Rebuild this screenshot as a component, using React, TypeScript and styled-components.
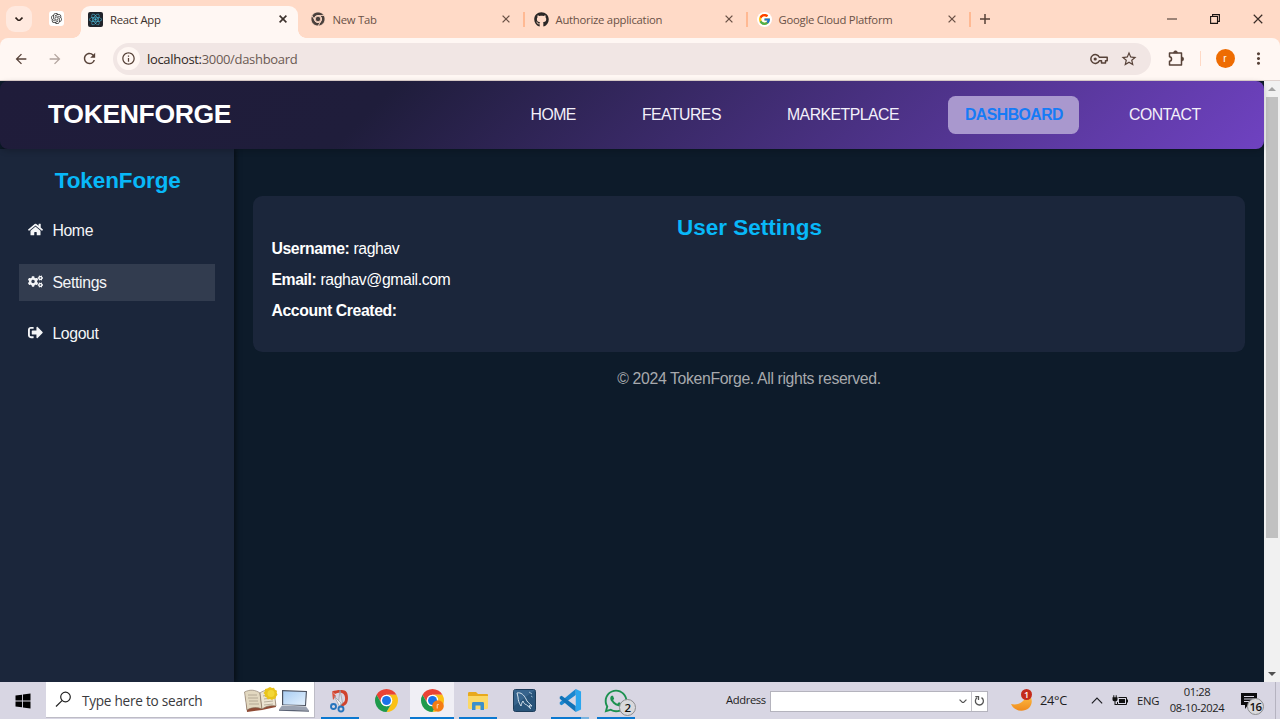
import React from 'react';
import styled, { createGlobalStyle } from 'styled-components';
import { FaHome, FaCogs, FaSignOutAlt, FaReact, FaGithub, FaWhatsapp } from 'react-icons/fa';
import { FcGoogle } from 'react-icons/fc';
import { RiOpenaiFill } from 'react-icons/ri';
import { MdArrowBack, MdArrowForward, MdRefresh, MdStarBorder, MdInfoOutline, MdMoreVert } from 'react-icons/md';

const GlobalStyle = createGlobalStyle`
  * { box-sizing: border-box; }
  html, body { margin: 0; padding: 0; }
  body { width: 1280px; height: 719px; overflow: hidden; font-family: "Liberation Sans", Arial, sans-serif; }
  svg { display: block; flex: none; }
  h2, p { margin: 0; }
`;

const UI_FONT = '"Open Sans", "Noto Sans", sans-serif';

const Screen = styled.div`
  display: flex;
  flex-direction: column;
  width: 1280px;
  height: 719px;
  overflow: hidden;
`;

/* ---------- browser ---------- */
const TabStrip = styled.div`
  display: flex;
  height: 38px;
  padding-top: 6px;
  background: #ffdac7;
  font-family: ${UI_FONT};
  color: #574238;
`;
const TabSearch = styled.div`
  display: grid;
  place-items: center;
  width: 26px;
  height: 26px;
  margin-left: 6px;
  border-radius: 9px;
  background: #ffe9df;
  color: #2e211b;
`;
const PinnedTab = styled.div`
  display: grid;
  place-items: center;
  width: 15px;
  height: 15px;
  margin: 5px 17px 0 17px;
  border-radius: 3px;
  background: #fff;
  color: #333;
`;
const Tab = styled.div<{ $active?: boolean }>`
  position: relative;
  display: flex;
  align-items: center;
  width: ${p => (p.$active ? 217 : 223)}px;
  height: ${p => (p.$active ? 32 : 26)}px;
  margin-right: ${p => (p.$active ? 5.5 : 0)}px;
  padding: ${p => (p.$active ? '0 11px 6px 7px' : '0 2px 0 7px')};
  gap: 7px;
  border-radius: 9px 9px 0 0;
  background: ${p => (p.$active ? '#fff7f3' : 'transparent')};
  color: ${p => (p.$active ? '#3c312c' : '#6a5146')};
  ${p => p.$active && `
    &::before, &::after {
      content: "";
      position: absolute;
      bottom: 0;
      width: 8px;
      height: 8px;
    }
    &::before { left: -8px; background: radial-gradient(circle at 0 0, transparent 7.5px, #fff7f3 8px); }
    &::after { right: -8px; background: radial-gradient(circle at 100% 0, transparent 7.5px, #fff7f3 8px); }
  `}
`;
const TabTitle = styled.span`
  flex: 1;
  font-size: 11.3px;
  line-height: 15px;
  letter-spacing: -0.25px;
  white-space: nowrap;
`;
const TabDivider = styled.i`
  width: 1.5px;
  height: 15px;
  margin-left: 6.5px;
  background: #ffb993;
`;
const TabIcon = styled.span<{ $kind?: 'react' | 'round' }>`
  display: grid;
  place-items: center;
  width: 15px;
  height: 15px;
  border-radius: ${p => (p.$kind === 'round' ? '50%' : '2px')};
  background: ${p => (p.$kind === 'react' ? '#20232a' : p.$kind === 'round' ? '#fff' : 'transparent')};
  color: ${p => (p.$kind === 'react' ? '#4cb9d8' : '#2b2726')};
`;
const NewTab = styled.div`
  padding: 8px 0 0 7.5px;
`;
const WindowControls = styled.div`
  display: flex;
  width: 130px;
  height: 26px;
  margin-left: auto;
  color: #3a2d27;
`;
const WindowControl = styled.div`
  display: grid;
  place-items: center;
  width: 43.3px;
`;
const Toolbar = styled.div`
  display: flex;
  align-items: center;
  height: 43px;
  padding: 0 0 1px 11px;
  border-bottom: 1px solid #dfd2ce;
  border-radius: 8px 8px 0 0;
  background: #fff7f3;
  color: #574238;
  font-family: ${UI_FONT};
`;
const ToolbarWrap = styled.div`
  background: #ffdac7;
`;
const NavButton = styled.div<{ $dim?: boolean }>`
  display: grid;
  place-items: center;
  width: 20px;
  margin-right: 14px;
  opacity: ${p => (p.$dim ? 0.45 : 1)};
`;
const AddressBar = styled.div`
  display: flex;
  align-items: center;
  width: 1038px;
  height: 32px;
  padding: 0 13.5px 0 4px;
  border-radius: 16px;
  background: #f1e6e4;
`;
const SiteInfo = styled.div`
  display: grid;
  place-items: center;
  width: 23px;
  height: 23px;
  margin-right: 7px;
  border-radius: 50%;
  background: #fff7f3;
`;
const Url = styled.span`
  flex: 1;
  font-size: 13px;
  letter-spacing: -0.32px;
  color: #2f2723;
  span { color: #6b5a53; }
`;
const AddressActions = styled.div`
  display: flex;
  align-items: center;
  gap: 12px;
`;
const Extensions = styled.div`
  margin: 0 0 1px 17px;
`;
const ToolbarDivider = styled.i`
  width: 1.5px;
  height: 15px;
  margin: 0 14.5px 0 14.5px;
  background: #ffd9c5;
`;
const Avatar = styled.div`
  display: grid;
  place-items: center;
  width: 19px;
  height: 19px;
  margin-right: 14.5px;
  border-radius: 50%;
  background: #ee6c02;
  color: #fff;
  font: 10px "Liberation Sans", sans-serif;
`;

/* ---------- page ---------- */
const Viewport = styled.div`
  display: flex;
  height: 601px;
  background: #0d1b2a;
`;
const Page = styled.div`
  display: flex;
  flex-direction: column;
  width: 1264px;
`;
const Navbar = styled.header`
  z-index: 2;
  display: flex;
  align-items: center;
  justify-content: space-between;
  height: 68px;
  padding: 0 47px 0 48px;
  border-radius: 8px;
  background: linear-gradient(135deg, #1f1c3a, #1f1d3b 30%, #6f42c1);
  box-shadow: 0 2px 6px rgba(0, 0, 0, 0.2);
`;
const Brand = styled.div`
  color: #fff;
  font-size: 26.6px;
  font-weight: 700;
  line-height: 30px;
  letter-spacing: -0.4px;
  padding-bottom: 2px;
`;
const NavLinks = styled.nav`
  display: flex;
  gap: 32.9px;
`;
const NavLink = styled.a<{ $active?: boolean }>`
  height: 38px;
  padding: 0 16.4px 0 16.8px;
  border-radius: 7.5px;
  font-size: 15.8px;
  font-weight: ${p => (p.$active ? 700 : 400)};
  line-height: 37px;
  letter-spacing: -0.52px;
  color: ${p => (p.$active ? '#167bf6' : '#f3f0fa')};
  background: ${p => (p.$active ? '#a998ce' : 'transparent')};
`;
const Body = styled.div`
  display: flex;
  flex: 1;
`;
const Sidebar = styled.aside`
  width: 234.4px;
  padding: 18px 19px 0 18.6px;
  background: #1b263b;
  box-shadow: 2px 0 5px rgba(0, 0, 0, 0.5);
`;
const SidebarTitle = styled.h2`
  margin-bottom: 18.4px;
  padding-left: 1.5px;
  color: #08b8f8;
  font-size: 22.5px;
  line-height: 27px;
  letter-spacing: -0.1px;
  text-align: center;
`;
const SideItem = styled.a<{ $active?: boolean }>`
  display: flex;
  align-items: center;
  gap: 9.4px;
  height: 37.5px;
  margin-bottom: 14px;
  padding-left: 9.4px;
  background: ${p => (p.$active ? '#323c4f' : 'transparent')};
  color: #f4f5f7;
  font-size: 15.8px;
  letter-spacing: -0.35px;
  svg { margin-bottom: 3px; }
`;
const Main = styled.main`
  flex: 1;
  padding: 47px 19px 0 18.6px;
`;
const Card = styled.section`
  height: 156px;
  padding: 19px 18.4px 0;
  border-radius: 9.4px;
  background: #1b263b;
  color: #fff;
`;
const CardTitle = styled.h2`
  padding-left: 1px;
  color: #08b8f8;
  font-size: 22.5px;
  line-height: 26px;
  text-align: center;
`;
const Detail = styled.p`
  margin: -1px 0 14px;
  font-size: 15.8px;
  line-height: 18px;
  letter-spacing: -0.4px;
`;
const Footer = styled.footer`
  margin-top: 18px;
  color: #a7a9ad;
  font-size: 15.8px;
  line-height: 18px;
  letter-spacing: -0.36px;
  text-align: center;
`;
const Scrollbar = styled.div`
  display: flex;
  flex-direction: column;
  align-items: center;
  width: 16px;
  background: #f1f1f1;
`;
const ScrollArrow = styled.div`
  display: grid;
  place-items: center;
  height: 16px;
`;
const Thumb = styled.div`
  width: 12px;
  height: 441px;
  margin-bottom: auto;
  background: #c1c1c1;
`;

/* ---------- taskbar ---------- */
const Taskbar = styled.div`
  display: flex;
  align-items: center;
  height: 37px;
  background: #d8d6e3;
  color: #1d1d22;
  font-family: ${UI_FONT};
`;
const Start = styled.div`
  display: grid;
  place-items: center;
  width: 45px;
  color: #000;
`;
const Search = styled.div`
  display: flex;
  align-items: center;
  width: 269px;
  height: 36px;
  margin: 0 2px 1px 1px;
  padding: 0 4px 0 9px;
  border: solid #bdbcc6;
  border-width: 0 1px 1px 0;
  background: #fff;
  font-size: 13.6px;
  letter-spacing: -0.25px;
`;
const SearchLabel = styled.span`
  flex: 1;
  margin: 2px 0 0 10px;
  color: #3a3a3d;
`;
const Apps = styled.div`
  display: flex;
  height: 37px;
`;
const TaskButton = styled.div<{ $active?: boolean; $running?: boolean; $stacked?: boolean }>`
  position: relative;
  display: grid;
  place-items: center;
  width: 44px;
  height: 37px;
  margin: 0 1px;
  background: ${p => (p.$active ? '#f0eff5' : 'transparent')};
  ${p => p.$running && `
    &::after {
      content: "";
      position: absolute;
      left: ${p.$active ? 0 : 3}px;
      right: ${p.$active ? 0 : 3}px;
      bottom: 0;
      height: 2px;
      background: ${p.$stacked ? 'linear-gradient(90deg, #0b78d0 80%, #79b3e0 80%)' : '#0b78d0'};
    }
  `}
`;
const ProfileBadge = styled.svg`
  position: absolute;
  left: 22px;
  top: 18px;
`;
const CountBadge = styled.span<{ $x: number; $y: number }>`
  position: absolute;
  left: ${p => p.$x}px;
  top: ${p => p.$y}px;
  display: grid;
  place-items: center;
  width: 17px;
  height: 17px;
  border: 1px solid #8b8b8e;
  border-radius: 50%;
  background: #d9d9dc;
  color: #111;
  font-size: 11.5px;
  font-weight: 600;
  line-height: 15px;
  letter-spacing: -0.5px;
`;
const AddressLabel = styled.span`
  width: 40px;
  margin: 0 4px 2px 87px;
  font-size: 11.2px;
  letter-spacing: -0.35px;
`;
const AddressField = styled.div`
  display: flex;
  align-items: center;
  justify-content: flex-end;
  width: 218px;
  height: 21px;
  margin-top: 1px;
  border: 1px solid #b4b3bd;
  background: #fff;
  color: #555;
`;
const AddressReload = styled.div`
  display: grid;
  place-items: center;
  width: 16px;
  height: 19px;
  margin-left: 4px;
  border-left: 1px solid #c4c3ca;
`;
const Weather = styled.div`
  position: relative;
  margin: 0 6px 0 22px;
`;
const AlertDot = styled.span`
  position: absolute;
  left: 11px;
  top: 0;
  width: 11px;
  height: 11px;
  border-radius: 50%;
  background: #c42b1c;
  color: #fff;
  font-size: 9px;
  font-weight: 600;
  line-height: 11px;
  text-align: center;
`;
const TrayText = styled.span<{ $width: number; $size: number; $spacing?: number }>`
  width: ${p => p.$width}px;
  padding-bottom: 1px;
  font-size: ${p => p.$size}px;
  letter-spacing: ${p => p.$spacing ?? 0}px;
  white-space: nowrap;
`;
const TrayIcons = styled.div`
  display: flex;
  align-items: center;
  gap: 9px;
  margin-right: 9px;
`;
const Clock = styled.div`
  width: 60px;
  margin-left: 6px;
  font-size: 11.2px;
  line-height: 16.5px;
  letter-spacing: -0.4px;
  text-align: center;
  padding-bottom: 1px;
`;
const Notifications = styled.div`
  position: relative;
  margin-left: 14px;
`;
const ShowDesktop = styled.div`
  width: 5px;
  height: 37px;
  margin-left: auto;
  border-left: 1px solid #b5b3c0;
`;

const Close = ({ size = 8, w = 1.3 }: { size?: number; w?: number }) => (
  <svg width={size} height={size} viewBox="0 0 8 8" stroke="currentColor" strokeWidth={w}>
    <path d="M.6.6l6.8 6.8M7.4.6L.6 7.4" />
  </svg>
);

const Chevron = ({ up, size = 9, w = 1.5 }: { up?: boolean; size?: number; w?: number }) => (
  <svg width={size} height={size * 0.6} viewBox="0 0 10 6" fill="none" stroke="currentColor" strokeWidth={w}>
    <path d={up ? 'M.7 5.3L5 1l4.3 4.3' : 'M.7.7L5 5 9.3.7'} />
  </svg>
);

const KeyIcon = () => (
  <svg width="18" height="12" viewBox="0 0 18 12" fill="none" stroke="currentColor" strokeWidth="1.5">
    <path d="M9.300 4.300A4.400 4.400 0 1 0 9.300 7.700H11.500V10H15.500V7.700H17.200V4.300z" strokeLinejoin="round" />
    <circle cx="5.200" cy="6" r="1.600" fill="currentColor" stroke="none" />
  </svg>
);

const PuzzleIcon = () => (
  <svg width="17" height="17" viewBox="0 0 17 17" fill="none" stroke="currentColor" strokeWidth="1.5" strokeLinejoin="round">
    <path d="M1.500 3H13.500V15H1.500V11.300C4.200 11.100 4.200 6.900 1.500 6.700z" />
    <path d="M5.500 2.800a2 2 0 0 1 4 0zM13.700 7a2 2 0 0 1 0 4z" fill="currentColor" strokeWidth=".6" />
  </svg>
);

const WindowsLogo = () => (
  <svg width="16" height="16" viewBox="0 0 16 16" fill="#000">
    <path d="M.5 2.600L7 1.700v5.800H.5zM7.900 1.600L15.500.5v7H7.900zM.5 8.400H7v5.900l-6.500-.9zM7.900 8.400h7.600v7.100l-7.600-1.100z" />
  </svg>
);

const ChromeLogo = ({ size = 23, mono }: { size?: number; mono?: boolean }) => {
  const c = mono ? ['#4a403c', '#4a403c', '#4a403c', '#ffdac7', '#4a403c'] : ['#ea4335', '#fbc116', '#1e9a4b', '#fff', '#1a73e8'];
  const gap = mono ? '#ffdac7' : 'none';
  return (
    <svg width={size} height={size} viewBox="0 0 48 48" stroke={gap} strokeWidth={mono ? 2.5 : 0}>
      <path fill={c[0]} d="M24 12h20.78a24 24 0 0 0-41.56 0L13.6 30A12 12 0 0 1 24 12z" />
      <path fill={c[1]} d="M34.39 30L24 48a24 24 0 0 0 20.78-36H24a12 12 0 0 1 10.39 18z" />
      <path fill={c[2]} d="M13.6 30L3.22 12A24 24 0 0 0 24 48l10.39-18A12 12 0 0 1 13.6 30z" />
      <circle cx="24" cy="24" r="12" fill={c[3]} />
      <circle cx="24" cy="24" r="9.3" fill={c[4]} />
    </svg>
  );
};

const BookArt = () => (
  <svg width="34" height="26" viewBox="0 0 34 26">
    <path d="M1 6l15 1 14-3 2 16-14 3-15 2z" fill="#8f4a34" />
    <path d="M.5 5c6-3 11-2 15.500 1l2 16c-5-2-10-2-15 1z" fill="#e2d8c0" stroke="#7e6f5c" strokeWidth=".6" />
    <path d="M16 6c4-3 9-4 14-2l2 15c-5-1-10 0-14 3z" fill="#ece4d2" stroke="#7e6f5c" strokeWidth=".6" />
    <path d="M4 8l9 0M4 11l10 0M5 14l9 0M5 17l10 0M19 9l8-2M20 12l8-1M20 15l9-1M20 18l9-1" stroke="#aaa08c" strokeWidth=".8" />
    <path d="M26 0l2 1 2-.3 1 2 2 1-.3 2 .8 2-1.400 1.700-.4 2-2.200.5L28 13l-2-1-2.300.6-1-2-2-1 .2-2.200L19.500 6l1.400-1.800L21 2l2.200-.6z" fill="#e9c41c" />
    <circle cx="27" cy="6.500" r="3.500" fill="#f3d736" />
  </svg>
);

const LaptopArt = () => (
  <svg width="32" height="26" viewBox="0 0 32 26">
    <defs>
      <linearGradient id="lcd" x1="0" y1="0" x2="1" y2="1">
        <stop offset="0" stopColor="#a9cdf3" />
        <stop offset="1" stopColor="#e4f1fd" />
      </linearGradient>
    </defs>
    <path d="M4 3l25 1-1 15-24-1z" fill="#4a505e" />
    <path d="M5.200 4.300l22.600.8-.8 13-21.800-.7z" fill="url(#lcd)" />
    <path d="M4 18.500l24 1 3 4-30-1z" fill="#9aa2b1" />
    <path d="M1 22.500l30 1v1.200l-30-1z" fill="#596174" />
  </svg>
);

const SnipLogo = () => (
  <svg width="22" height="24" viewBox="0 0 22 24">
    <path d="M3 2.500C8 .5 14 .5 16.500 2c3 2 3 9 1.500 12-1 2-4 3.500-6 4l-1-3c3-.5 4.500-2 5-4 .5-3-.5-6-3-7-2-.6-5 0-7 1z" fill="#d1432c" />
    <path d="M3 2.500L7 7l-3 4z" fill="#e0533b" />
    <path d="M11 1l2.500 13L11 17l-1.500-4z" fill="#dfe2e8" stroke="#8a8e98" strokeWidth=".6" />
    <path d="M5 7l7 7-1 4z" fill="#f0f1f4" stroke="#8a8e98" strokeWidth=".6" />
    <circle cx="4.500" cy="17.500" r="2.500" fill="none" stroke="#2675bd" strokeWidth="1.900" />
    <circle cx="12" cy="20" r="2.500" fill="none" stroke="#2675bd" strokeWidth="1.900" />
  </svg>
);

const FolderLogo = () => (
  <svg width="22" height="20" viewBox="0 0 22 20">
    <path d="M1 2.500C1 1.700 1.500 1 2.300 1H9l2 2h9c.6 0 1 .5 1 1.200V17H1z" fill="#e8a91c" />
    <path d="M1 5h20v11.500c0 .8-.5 1.500-1.300 1.500H2.300C1.500 18 1 17.300 1 16.500z" fill="#fbd866" />
    <path d="M5 19v-6.500c0-.8.5-1.500 1.300-1.500h9.400c.8 0 1.300.7 1.300 1.500V19h-3.500v-4.500h-5V19z" fill="#3a8fcb" />
  </svg>
);

const MysqlLogo = () => (
  <svg width="23" height="23" viewBox="0 0 23 23">
    <rect x=".5" y=".5" width="22" height="22" rx="2" fill="#29547a" stroke="#1d3d5b" />
    <path d="M1 1h21L1 17z" fill="#41709a" opacity=".6" />
    <path d="M4 4c4-1 7 2 9 6 1 3 3 4 6 7l-3-.3 1.500 3-4-4c-2-.3-3-2-3.500-3.700-1 1-1.500 3-2 5C6 14 5 11 5 8z" fill="none" stroke="#d4e1ec" strokeWidth="1" />
    <path d="M16 3l3 2M18 7l1.500 1" stroke="#b9d0e2" strokeWidth=".8" />
  </svg>
);

const CodeLogo = () => (
  <svg width="23" height="23" viewBox="0 0 24 24">
    <path d="M.8 13.900L17.500 0v6.300L2.800 17l-2-1.100z" fill="#1a87d0" />
    <path d="M.8 8.100L2.800 7l14.700 10.700V24L.8 10.100z" fill="#1173b8" />
    <path d="M17.500 0L23 2.600v18.800L17.500 24z" fill="#2ba6ee" />
  </svg>
);

const navItems = ['HOME', 'FEATURES', 'MARKETPLACE', 'DASHBOARD', 'CONTACT'];

export default function App() {
  return (
    <Screen>
      <GlobalStyle />
      <TabStrip>
        <TabSearch><Chevron size={8} w={2} /></TabSearch>
        <PinnedTab><RiOpenaiFill size={13} /></PinnedTab>
        <Tab $active>
          <TabIcon $kind="react"><FaReact size={13} /></TabIcon>
          <TabTitle>React App</TabTitle>
          <Close w={1.6} />
        </Tab>
        <Tab>
          <TabIcon><ChromeLogo size={14} mono /></TabIcon>
          <TabTitle>New Tab</TabTitle>
          <Close />
          <TabDivider />
        </Tab>
        <Tab>
          <TabIcon><FaGithub size={15} /></TabIcon>
          <TabTitle>Authorize application</TabTitle>
          <Close />
          <TabDivider />
        </Tab>
        <Tab>
          <TabIcon $kind="round"><FcGoogle size={13} /></TabIcon>
          <TabTitle>Google Cloud Platform</TabTitle>
          <Close />
          <TabDivider />
        </Tab>
        <NewTab>
          <svg width="10" height="10" viewBox="0 0 10 10" stroke="currentColor" strokeWidth="1.500"><path d="M5 0v10M0 5h10" /></svg>
        </NewTab>
        <WindowControls>
          <WindowControl><svg width="10" height="2" viewBox="0 0 10 2"><path d="M0 1h10" stroke="currentColor" /></svg></WindowControl>
          <WindowControl>
            <svg width="10" height="10" viewBox="0 0 10 10" fill="none" stroke="#1b1412" strokeWidth="1.100"><path d="M.6 2.500h6.900v6.900H.6zM2.600 2.500V.6h6.800v6.800H7.500" /></svg>
          </WindowControl>
          <WindowControl><Close size={10} w={0.95} /></WindowControl>
        </WindowControls>
      </TabStrip>
      <ToolbarWrap>
        <Toolbar>
          <NavButton><MdArrowBack size={16} /></NavButton>
          <NavButton $dim><MdArrowForward size={16} /></NavButton>
          <NavButton><MdRefresh size={17} /></NavButton>
          <AddressBar>
            <SiteInfo><MdInfoOutline size={15} /></SiteInfo>
            <Url>localhost:<span>3000/dashboard</span></Url>
            <AddressActions>
              <KeyIcon />
              <MdStarBorder size={18} />
            </AddressActions>
          </AddressBar>
          <Extensions><PuzzleIcon /></Extensions>
          <ToolbarDivider />
          <Avatar>r</Avatar>
          <MdMoreVert size={19} />
        </Toolbar>
      </ToolbarWrap>
      <Viewport>
        <Page>
          <Navbar>
            <Brand>TOKENFORGE</Brand>
            <NavLinks>
              {navItems.map(n => <NavLink key={n} $active={n === 'DASHBOARD'}>{n}</NavLink>)}
            </NavLinks>
          </Navbar>
          <Body>
            <Sidebar>
              <SidebarTitle>TokenForge</SidebarTitle>
              <SideItem><FaHome size={15} />Home</SideItem>
              <SideItem $active><FaCogs size={15} />Settings</SideItem>
              <SideItem><FaSignOutAlt size={15} />Logout</SideItem>
            </Sidebar>
            <Main>
              <Card>
                <CardTitle>User Settings</CardTitle>
                <Detail><b>Username:</b> raghav</Detail>
                <Detail><b>Email:</b> raghav@gmail.com</Detail>
                <Detail><b>Account Created:</b></Detail>
              </Card>
              <Footer>© 2024 TokenForge. All rights reserved.</Footer>
            </Main>
          </Body>
        </Page>
        <Scrollbar>
          <ScrollArrow><svg width="8" height="4" viewBox="0 0 8 4"><path d="M0 4l4-4 4 4z" fill="#a3a3a3" /></svg></ScrollArrow>
          <Thumb />
          <ScrollArrow><svg width="8" height="4" viewBox="0 0 8 4"><path d="M0 0l4 4 4-4z" fill="#505050" /></svg></ScrollArrow>
        </Scrollbar>
      </Viewport>
      <Taskbar>
        <Start><WindowsLogo /></Start>
        <Search>
          <svg width="17" height="17" viewBox="0 0 17 17" fill="none" stroke="#222" strokeWidth="1.200"><circle cx="10.500" cy="6" r="4.800" /><path d="M7 9.600L1 15.500" /></svg>
          <SearchLabel>Type here to search</SearchLabel>
          <BookArt />
          <LaptopArt />
        </Search>
        <Apps>
          <TaskButton $running><SnipLogo /></TaskButton>
          <TaskButton><ChromeLogo /></TaskButton>
          <TaskButton $active $running>
            <ChromeLogo />
            <ProfileBadge width="12" height="12" viewBox="0 0 12 12">
              <circle cx="6" cy="6" r="5.800" fill="#f57c14" />
              <path d="M5.200 8.500V4.500c.3 0 1-.3 1.600 0" fill="none" stroke="#ffe2c8" strokeWidth=".9" />
            </ProfileBadge>
          </TaskButton>
          <TaskButton $running><FolderLogo /></TaskButton>
          <TaskButton><MysqlLogo /></TaskButton>
          <TaskButton $running $stacked><CodeLogo /></TaskButton>
          <TaskButton $running><FaWhatsapp size={26} color="#1c9150" /><CountBadge $x={25} $y={17}>2</CountBadge></TaskButton>
        </Apps>
        <AddressLabel>Address</AddressLabel>
        <AddressField>
          <Chevron size={8} />
          <AddressReload>
            <svg width="11" height="12" viewBox="0 0 11 12" fill="none" stroke="#555" strokeWidth="1.300"><path d="M7.500 2.600a4 4 0 1 1-4.500.2M1.300 1.700h3.200v3.200" /></svg>
          </AddressReload>
        </AddressField>
        <Weather>
          <svg width="24" height="24" viewBox="0 0 24 24">
            <defs><linearGradient id="moon" x1="0" y1="0" x2="0" y2="1"><stop offset="0" stopColor="#ffc54a" /><stop offset="1" stopColor="#f08a1c" /></linearGradient></defs>
            <path d="M17 4c6 4 6 11 2 15C13 24 4 22 1 15c5 1 9 0 12-3s4-5 4-8z" fill="url(#moon)" />
          </svg>
          <AlertDot>1</AlertDot>
        </Weather>
        <TrayText $width={51} $size={12.8} $spacing={-0.3}>24°C</TrayText>
        <TrayIcons>
          <Chevron up size={12} w={1} />
          <svg width="16" height="11" viewBox="0 0 16 11">
            <path d="M6.500 2.500h8v7h-9V7" fill="none" stroke="#111" />
            <path d="M7 4h6v4H7zM15 4.500h1v3h-1zM.5 2.300h5v2.200C5.300 6 4.300 6.300 3 6.300S.5 6 .5 4.500zM1.300.3h1v2h-1zM3.700.3h1v2h-1zM2.500 6h1v3h2v1h-3z" fill="#111" />
          </svg>
        </TrayIcons>
        <TrayText $width={24} $size={11.3} $spacing={-0.3}>ENG</TrayText>
        <Clock>01:28<br />08-10-2024</Clock>
        <Notifications>
          <svg width="16" height="16" viewBox="0 0 16 16"><path d="M0 0h16v12H7l-3 4v-4H0z" fill="#0c0c0e" /><path d="M3 3.500h10M3 6h10M3 8.500h7" stroke="#d8d6e3" /></svg>
          <CountBadge $x={6} $y={5}>16</CountBadge>
        </Notifications>
        <ShowDesktop />
      </Taskbar>
    </Screen>
  );
}
